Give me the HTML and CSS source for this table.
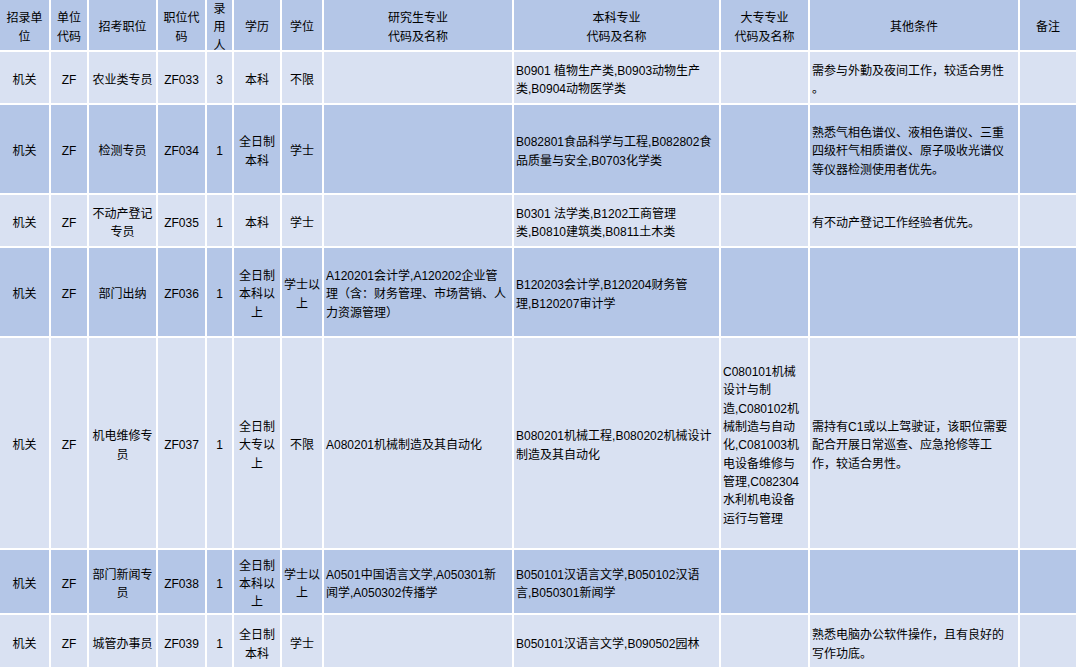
FILE: index.html
```html
<!DOCTYPE html>
<html lang="zh-CN">
<head>
<meta charset="utf-8">
<title>招录职位表</title>
<link rel="stylesheet" href="styles.css">
</head>
<body>
<div class="sheet">
  <div class="row head">
    <div class="c">招录单<br>位</div>
    <div class="c">单位<br>代码</div>
    <div class="c">招考职位</div>
    <div class="c">职位代<br>码</div>
    <div class="c">录<br>用<br>人</div>
    <div class="c">学历</div>
    <div class="c">学位</div>
    <div class="c">研究生专业<br>代码及名称</div>
    <div class="c">本科专业<br>代码及名称</div>
    <div class="c">大专专业<br>代码及名称</div>
    <div class="c">其他条件</div>
    <div class="c">备注</div>
  </div>

  <div class="row light">
    <div class="c">机关</div>
    <div class="c">ZF</div>
    <div class="c">农业类专员</div>
    <div class="c">ZF033</div>
    <div class="c">3</div>
    <div class="c">本科</div>
    <div class="c">不限</div>
    <div class="c l"></div>
    <div class="c l">B0901 植物生产类,B0903动物生产<br>类,B0904动物医学类</div>
    <div class="c l"></div>
    <div class="c l">需参与外勤及夜间工作，较适合男性<br>。</div>
    <div class="c"></div>
  </div>

  <div class="row dark">
    <div class="c">机关</div>
    <div class="c">ZF</div>
    <div class="c">检测专员</div>
    <div class="c">ZF034</div>
    <div class="c">1</div>
    <div class="c">全日制<br>本科</div>
    <div class="c">学士</div>
    <div class="c l"></div>
    <div class="c l">B082801食品科学与工程,B082802食<br>品质量与安全,B0703化学类</div>
    <div class="c l"></div>
    <div class="c l">熟悉气相色谱仪、液相色谱仪、三重<br>四级杆气相质谱仪、原子吸收光谱仪<br>等仪器检测使用者优先。</div>
    <div class="c"></div>
  </div>

  <div class="row light">
    <div class="c">机关</div>
    <div class="c">ZF</div>
    <div class="c">不动产登记<br>专员</div>
    <div class="c">ZF035</div>
    <div class="c">1</div>
    <div class="c">本科</div>
    <div class="c">学士</div>
    <div class="c l"></div>
    <div class="c l">B0301 法学类,B1202工商管理<br>类,B0810建筑类,B0811土木类</div>
    <div class="c l"></div>
    <div class="c l">有不动产登记工作经验者优先。</div>
    <div class="c"></div>
  </div>

  <div class="row dark">
    <div class="c">机关</div>
    <div class="c">ZF</div>
    <div class="c">部门出纳</div>
    <div class="c">ZF036</div>
    <div class="c">1</div>
    <div class="c">全日制<br>本科以<br>上</div>
    <div class="c">学士以<br>上</div>
    <div class="c l">A120201会计学,A120202企业管<br>理（含：财务管理、市场营销、人<br>力资源管理）</div>
    <div class="c l">B120203会计学,B120204财务管<br>理,B120207审计学</div>
    <div class="c l"></div>
    <div class="c l"></div>
    <div class="c"></div>
  </div>

  <div class="row light">
    <div class="c">机关</div>
    <div class="c">ZF</div>
    <div class="c">机电维修专<br>员</div>
    <div class="c">ZF037</div>
    <div class="c">1</div>
    <div class="c">全日制<br>大专以<br>上</div>
    <div class="c">不限</div>
    <div class="c l">A080201机械制造及其自动化</div>
    <div class="c l">B080201机械工程,B080202机械设计<br>制造及其自动化</div>
    <div class="c l">C080101机械<br>设计与制<br>造,C080102机<br>械制造与自动<br>化,C081003机<br>电设备维修与<br>管理,C082304<br>水利机电设备<br>运行与管理</div>
    <div class="c l">需持有C1或以上驾驶证，该职位需要<br>配合开展日常巡查、应急抢修等工<br>作，较适合男性。</div>
    <div class="c"></div>
  </div>

  <div class="row dark">
    <div class="c">机关</div>
    <div class="c">ZF</div>
    <div class="c">部门新闻专<br>员</div>
    <div class="c">ZF038</div>
    <div class="c">1</div>
    <div class="c">全日制<br>本科以<br>上</div>
    <div class="c">学士以<br>上</div>
    <div class="c l">A0501中国语言文学,A050301新<br>闻学,A050302传播学</div>
    <div class="c l">B050101汉语言文学,B050102汉语<br>言,B050301新闻学</div>
    <div class="c l"></div>
    <div class="c l"></div>
    <div class="c"></div>
  </div>

  <div class="row light">
    <div class="c">机关</div>
    <div class="c">ZF</div>
    <div class="c">城管办事员</div>
    <div class="c">ZF039</div>
    <div class="c">1</div>
    <div class="c">全日制<br>本科</div>
    <div class="c">学士</div>
    <div class="c l"></div>
    <div class="c l">B050101汉语言文学,B090502园林</div>
    <div class="c l"></div>
    <div class="c l">熟悉电脑办公软件操作，且有良好的<br>写作功底。</div>
    <div class="c"></div>
  </div>
</div>
</body>
</html>
```
FILE: styles.css
```css
html, body {
  margin: 0;
  padding: 0;
  background: #ffffff;
  overflow: hidden;
}

body {
  width: 1076px;
  height: 667px;
  font-family: "Liberation Sans", "Noto Sans CJK SC", sans-serif;
  font-size: 12px;
  color: #000000;
}

.sheet {
  display: grid;
  grid-template-columns: 49px 36px 67px 47px 25px 46px 40px 188px 205px 87px 208px 56px;
  grid-template-rows: 50px 51px 88px 51px 88px 210px 63px 54px;
  gap: 2px;
  width: 1076px;
  background: #ffffff;
}

.row {
  display: contents;
}

.c {
  display: flex;
  align-items: center;
  justify-content: center;
  text-align: center;
  line-height: 18.3px;
  white-space: nowrap;
  overflow: visible;
  padding-top: 5px;
}

.c.l {
  justify-content: flex-start;
  text-align: left;
  padding-left: 2px;
}

.head > .c,
.dark > .c {
  background: #b4c6e7;
}

.light > .c {
  background: #d9e1f2;
}
```
